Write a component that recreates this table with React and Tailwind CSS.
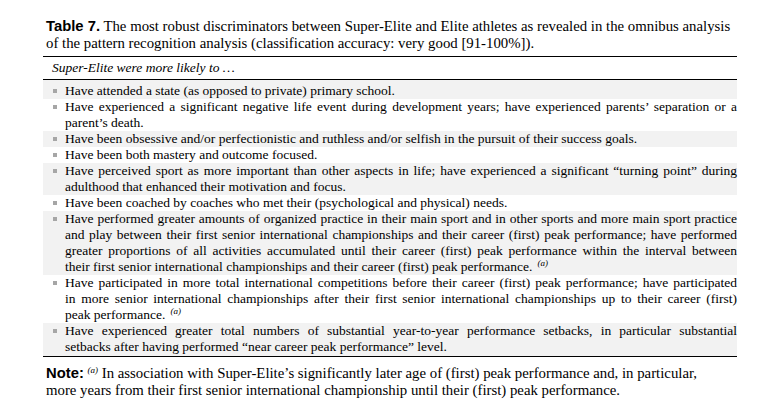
import React from 'react';

const rows = [
    ['Have attended a state (as opposed to private) primary school.'],
    ['Have experienced a significant negative life event during development years; have experienced parents’ separation or a', 'parent’s death.'],
    ['Have been obsessive and/or perfectionistic and ruthless and/or selfish in the pursuit of their success goals.'],
    ['Have been both mastery and outcome focused.'],
    ['Have perceived sport as more important than other aspects in life; have experienced a significant “turning point” during', 'adulthood that enhanced their motivation and focus.'],
    ['Have been coached by coaches who met their (psychological and physical) needs.'],
    [
        'Have performed greater amounts of organized practice in their main sport and in other sports and more main sport practice',
        'and play between their first senior international championships and their career (first) peak performance; have performed',
        'greater proportions of all activities accumulated until their career (first) peak performance within the interval between',
        'their first senior international championships and their career (first) peak performance.|a'
    ],
    [
        'Have participated in more total international competitions before their career (first) peak performance; have participated',
        'in more senior international championships after their first senior international championships up to their career (first)',
        'peak performance.|a'
    ],
    ['Have experienced greater total numbers of substantial year-to-year performance setbacks, in particular substantial', 'setbacks after having performed “near career peak performance” level.']
];

const Sup = () => (
    <span className="ml-[5px] text-[9px] leading-none italic relative -top-[5px]">(a)</span>
);

const Line = ({ text, last }) => {
    const [body, note] = text.split('|');
    return (
        <div className={last ? 'whitespace-nowrap' : 'text-justify [text-align-last:justify]'}>
            {body}{note ? <Sup /> : null}
        </div>
    );
};

const App = () => {
    return (
        <div className="w-[765px] h-[414px] bg-white text-black font-['Liberation_Serif']">
            <div className="ml-[43px] w-[694px] pt-[18px]">
                <p className="pl-[3px] text-[14.8px] leading-[17px] whitespace-nowrap font-['Liberation_Serif']">
                    <span className="font-['Liberation_Sans'] font-bold">Table 7.</span> The most robust discriminators between Super-Elite and Elite athletes as revealed in the omnibus analysis
                    <br />
                    of the pattern recognition analysis (classification accuracy: very good [91-100%]).
                </p>

                <div className="mt-[4px] border-t-[1.5px] border-b-[1.5px] border-black">
                    <div className="h-[22px] flex items-center pl-[9px] text-[13.5px] italic font-['Liberation_Serif']">
                        Super-Elite were more likely to …
                    </div>
                </div>

                <div className="border-b-[1.5px] border-black text-[13.5px] leading-[16px] font-['Liberation_Serif']">
                    {rows.map((lines, i) => (
                        <div
                            key={i}
                            className={
                                'flex ' +
                                (i % 2 === 0 ? 'bg-[#f2f2f2] ' : 'bg-white ') +
                                (i === 0 ? 'pt-[3px] ' : '') +
                                (i === rows.length - 1 ? 'pb-[1px]' : '')
                            }
                        >
                            <div className="w-[22px] shrink-0 flex justify-center pt-[6px] pl-[2px]">
                                <div className="w-[4px] h-[4px] bg-[#a6a6a6]"></div>
                            </div>
                            <div className="flex-1">
                                {lines.map((l, j) => (
                                    <Line key={j} text={l} last={j === lines.length - 1} />
                                ))}
                            </div>
                        </div>
                    ))}
                </div>

                <p className="mt-[8px] pl-[3px] text-[14.8px] leading-[17px] whitespace-nowrap font-['Liberation_Serif']">
                    <span className="font-['Liberation_Sans'] font-bold">Note:</span>{' '}
                    <span className="text-[9px] leading-none italic relative -top-[5px]">(a)</span> In association with Super-Elite’s significantly later age of (first) peak performance and, in particular,
                    <br />
                    more years from their first senior international championship until their (first) peak performance.
                </p>
            </div>
        </div>
    );
};

export default App;
